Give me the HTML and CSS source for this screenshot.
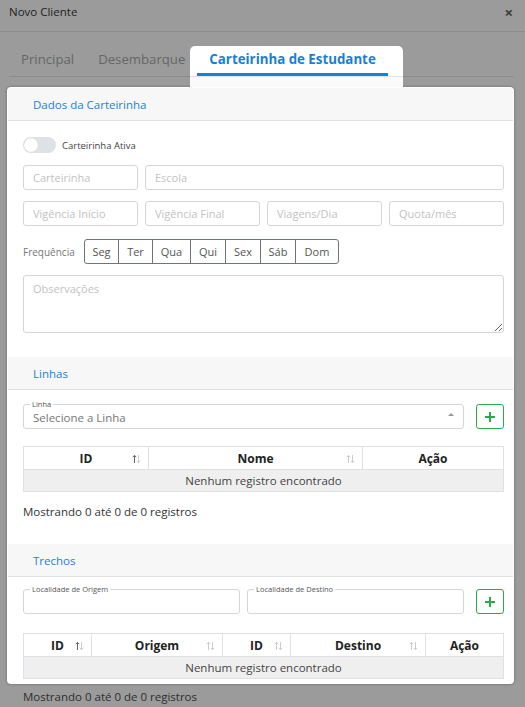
FILE: index.html
```html
<!DOCTYPE html>
<html lang="pt-BR">
<head>
<meta charset="utf-8">
<title>Novo Cliente</title>
<link rel="stylesheet" href="styles.css">
</head>
<body>
<div class="modal-header">
  <span class="modal-title">Novo Cliente</span>
  <span class="close">&times;</span>
</div>
<nav class="tabs">
  <span class="tab">Principal</span>
  <span class="tab">Desembarque</span>
  <div class="tab-active-wrap">
    <span class="tab tab-active">Carteirinha de Estudante</span>
    <div class="tab-strip"></div>
  </div>
</nav>

<div class="card">
  <div class="section-header">Dados da Carteirinha</div>
  <div class="section-body">
    <div class="toggle-row">
      <span class="toggle"><span class="knob"></span></span>
      <span class="toggle-label">Carteirinha Ativa</span>
    </div>
    <div class="grid4 row1">
      <input class="field" placeholder="Carteirinha">
      <input class="field span3" placeholder="Escola">
    </div>
    <div class="grid4 row2">
      <input class="field" placeholder="Vigência Início">
      <input class="field" placeholder="Vigência Final">
      <input class="field" placeholder="Viagens/Dia">
      <input class="field" placeholder="Quota/mês">
    </div>
    <div class="freq-row">
      <span class="freq-label">Frequência</span>
      <div class="btn-group">
        <span class="day w34">Seg</span><span class="day w34">Ter</span><span class="day w38">Qua</span><span class="day w35">Qui</span><span class="day w35">Sex</span><span class="day w35">Sáb</span><span class="day day-last">Dom</span>
      </div>
    </div>
    <textarea class="obs" placeholder="Observações"></textarea>
  </div>

  <div class="section-header sh-gap">Linhas</div>
  <div class="section-body">
    <div class="add-row">
      <div class="outlined grow">
        <span class="legend">Linha</span>
        <span class="select-text">Selecione a Linha</span>
        <span class="caret"></span>
      </div>
      <span class="plus-btn"><svg width="12" height="12" viewBox="0 0 12 12"><path d="M6 1v10M1 6h10" stroke="#2aa84a" stroke-width="2"/></svg></span>
    </div>
    <table class="tbl t1">
      <thead>
        <tr>
          <th class="c-id">ID<svg class="sort on" width="9" height="10" viewBox="0 0 9 10"><path d="M2.5 9V1.5M0.8 3.2L2.5 1.3 4.2 3.2" stroke="#666" fill="none" stroke-width="1"/><path d="M6.5 1v7.5M4.8 6.8L6.5 8.7 8.2 6.8" stroke="#ccc" fill="none" stroke-width="1"/></svg></th>
          <th class="c-nome">Nome<svg class="sort" width="9" height="10" viewBox="0 0 9 10"><path d="M2.5 9V1.5M0.8 3.2L2.5 1.3 4.2 3.2" stroke="#ccc" fill="none" stroke-width="1"/><path d="M6.5 1v7.5M4.8 6.8L6.5 8.7 8.2 6.8" stroke="#ccc" fill="none" stroke-width="1"/></svg></th>
          <th>Ação</th>
        </tr>
      </thead>
      <tbody>
        <tr><td colspan="3" class="empty">Nenhum registro encontrado</td></tr>
      </tbody>
    </table>
    <p class="info">Mostrando 0 até 0 de 0 registros</p>
  </div>

  <div class="section-header">Trechos</div>
  <div class="section-body">
    <div class="add-row add-row-tight">
      <div class="outlined half">
        <span class="legend">Localidade de Origem</span>
      </div>
      <div class="outlined half">
        <span class="legend">Localidade de Destino</span>
      </div>
      <span class="plus-btn"><svg width="12" height="12" viewBox="0 0 12 12"><path d="M6 1v10M1 6h10" stroke="#2aa84a" stroke-width="2"/></svg></span>
    </div>
    <table class="tbl t2">
      <thead>
        <tr>
          <th class="d1">ID<svg class="sort" width="9" height="10" viewBox="0 0 9 10"><path d="M2.5 9V1.5M0.8 3.2L2.5 1.3 4.2 3.2" stroke="#666" fill="none" stroke-width="1"/><path d="M6.5 1v7.5M4.8 6.8L6.5 8.7 8.2 6.8" stroke="#ccc" fill="none" stroke-width="1"/></svg></th>
          <th class="d2">Origem<svg class="sort" width="9" height="10" viewBox="0 0 9 10"><path d="M2.5 9V1.5M0.8 3.2L2.5 1.3 4.2 3.2" stroke="#ccc" fill="none" stroke-width="1"/><path d="M6.5 1v7.5M4.8 6.8L6.5 8.7 8.2 6.8" stroke="#ccc" fill="none" stroke-width="1"/></svg></th>
          <th class="d3">ID<svg class="sort" width="9" height="10" viewBox="0 0 9 10"><path d="M2.5 9V1.5M0.8 3.2L2.5 1.3 4.2 3.2" stroke="#ccc" fill="none" stroke-width="1"/><path d="M6.5 1v7.5M4.8 6.8L6.5 8.7 8.2 6.8" stroke="#ccc" fill="none" stroke-width="1"/></svg></th>
          <th class="d4">Destino<svg class="sort" width="9" height="10" viewBox="0 0 9 10"><path d="M2.5 9V1.5M0.8 3.2L2.5 1.3 4.2 3.2" stroke="#ccc" fill="none" stroke-width="1"/><path d="M6.5 1v7.5M4.8 6.8L6.5 8.7 8.2 6.8" stroke="#ccc" fill="none" stroke-width="1"/></svg></th>
          <th>Ação</th>
        </tr>
      </thead>
      <tbody>
        <tr><td colspan="5" class="empty">Nenhum registro encontrado</td></tr>
      </tbody>
    </table>
  </div>
</div>
<p class="info info-dim">Mostrando 0 até 0 de 0 registros</p>
</body>
</html>
```

FILE: styles.css
```css
* { box-sizing: border-box; }
html, body { margin: 0; padding: 0; }
body {
  background: #9b9b9b;
  font-family: "Open Sans", "DejaVu Sans", sans-serif;
  color: #222;
  width: 525px;
  height: 707px;
  overflow: hidden;
}
.modal-header {
  height: 32px;
  padding: 0 12px 0 9px;
  display: flex;
  align-items: center;
  justify-content: space-between;
  border-bottom: 1px solid #8c8c8c;
}
.modal-title { font-size: 11.5px; color: #222; padding-bottom: 8px; }
.close { font-size: 15px; font-weight: bold; color: #3a3a3a; padding-bottom: 8px; }

.tabs {
  display: flex;
  align-items: flex-start;
  margin: 14px 11px 0 9px;
  height: 31px;
  border-bottom: 1px solid #8c8c8c;
}
.tab {
  display: block;
  padding: 0 12px;
  font-size: 13.2px;
  line-height: 27px;
  color: #666;
  white-space: nowrap;
}
.tab-active-wrap {
  margin-left: -7px;
  padding: 0 15px 0 7px;
  background: #fff;
  border-radius: 5px 5px 0 0;
  height: 41px;
}
.tab-active {
  font-weight: bold;
  font-size: 13.3px;
  color: #1a7fd1;
  border-bottom: 3px solid #1a80d6;
  line-height: 27px;
}
.tab-strip {
  height: 11px;
  border-top: 1px solid #e3e3e3;
  margin: 0 -15px 0 -7px;
  background: #fafafa;
}

.card {
  margin: 10px 11px 0 7px;
  background: #fff;
  border-radius: 4px;
  box-shadow: 0 0 3px rgba(0,0,0,0.35);
  padding: 1px 1px 5px;
  height: 597px;
}
.section-header {
  background: #f7f7f7;
  height: 33px;
  border-bottom: 1px solid #dfdfdf;
  padding-left: 25px;
  font-size: 11.5px;
  line-height: 33px;
  color: #1b80dc;
}
.section-body { padding: 0 9px 0 15px; }

.toggle-row { display: flex; align-items: center; margin-top: 16px; height: 16px; }
.toggle {
  width: 33px; height: 16px; border-radius: 8px;
  background: #dee2e6;
  display: flex; align-items: center; padding-left: 1px;
}
.knob { width: 14px; height: 14px; border-radius: 50%; background: #fff; box-shadow: 0 0 1px rgba(0,0,0,0.2); }
.toggle-label { margin-left: 6px; font-size: 9.5px; color: #444; }

.grid4 { display: grid; grid-template-columns: repeat(4, 1fr); column-gap: 7px; }
.row1 { margin-top: 12px; }
.row2 { margin-top: 11px; }
.span3 { grid-column: span 3; }
.field {
  height: 25px;
  border: 1px solid #d3d6da;
  border-radius: 3px;
  padding: 0 9px;
  font-family: inherit;
  font-size: 11px;
  color: #333;
  width: 100%;
  outline: none;
}
.field::placeholder, .obs::placeholder { color: #c2c2c2; }

.freq-row { display: flex; align-items: center; margin-top: 13px; height: 25px; }
.freq-label { font-size: 10px; color: #777; width: 61px; }
.btn-group { display: flex; border: 1px solid #6c757d; border-radius: 3px; height: 25px; }
.day {
  font-size: 11px;
  line-height: 23px;
  color: #555;
  text-align: center;
  border-right: 1px solid #6c757d;
}
.w34 { width: 34px; }
.w35 { width: 35px; }
.w38 { width: 38px; }
.day-last { border-right: 0; width: 42px; }

.obs {
  display: block;
  margin-top: 11px;
  width: 100%;
  height: 58px;
  border: 1px solid #d3d6da;
  border-radius: 3px;
  padding: 5px 9px;
  font-family: inherit;
  font-size: 11px;
  outline: none;
  resize: vertical;
}
.sh-gap { margin-top: 24px; }

.add-row { display: flex; align-items: stretch; gap: 7px; margin-top: 14px; }
.add-row-tight { margin-top: 12px; }
.outlined {
  position: relative;
  height: 25px;
  border: 1px solid #d3d6da;
  border-radius: 3px;
  display: flex;
  align-items: center;
  padding: 0 9px;
}
.grow { flex: 1; margin-right: 5px; }
.half { width: 217px; }
.add-row .half + .half + .plus-btn { margin-left: 5px; }
.legend {
  position: absolute;
  left: 6px;
  top: -6px;
  padding: 0 2px;
  background: #fff;
  font-size: 7.5px;
  line-height: 10px;
  color: #555;
}
.select-text { font-size: 11.5px; color: #777; padding-top: 2px; flex: 1; }
.caret {
  width: 0; height: 0;
  border-left: 3px solid transparent;
  border-right: 3px solid transparent;
  border-bottom: 3px solid #999;
  margin-bottom: 4px;
}
.plus-btn {
  width: 28px; height: 25px;
  border: 1px solid #2aa84a;
  border-radius: 3px;
  display: flex; align-items: center; justify-content: center;
  flex: none;
}

.tbl {
  width: 100%;
  border-collapse: collapse;
  margin-top: 17px;
  table-layout: fixed;
}
.t2 { margin-top: 19px; }
.tbl th {
  position: relative;
  height: 23px;
  border: 1px solid #dee2e6;
  font-size: 12px;
  font-weight: bold;
  color: #222;
  text-align: center;
  padding: 0;
}
.tbl th .sort { position: absolute; right: 7px; top: 7px; }
.c-id { width: 125px; }
.c-nome { width: 214px; }
.d1 { width: 68px; }
.d2 { width: 131px; }
.d3 { width: 68px; }
.d4 { width: 135px; }
.empty {
  height: 22px;
  background: #efefef;
  border: 1px solid #dee2e6;
  text-align: center;
  font-size: 11.5px;
  color: #444;
  padding: 0;
}
.info {
  margin: 11px 0 23px;
  font-size: 11.5px;
  line-height: 18px;
  color: #333;
}
.info-dim { margin: 4px 0 0 23px; color: #2e2e2e; }
```
